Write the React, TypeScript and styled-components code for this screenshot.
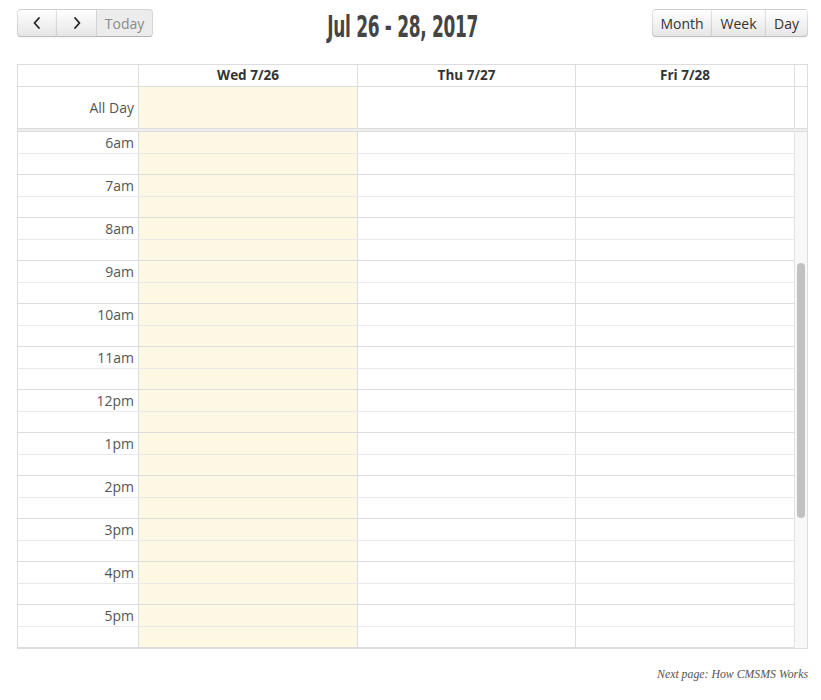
import React from "react";
import styled, { createGlobalStyle, css } from "styled-components";

const Global = createGlobalStyle`
  html, body { margin: 0; padding: 0; background: #fff; }
  body { font-family: "Open Sans", "Noto Sans", sans-serif; color: #333; font-size: 14px; }
  * { box-sizing: border-box; }
`;

const Page = styled.div`
  padding: 9px 13px 0 17px;
  width: 821px;
`;

const Toolbar = styled.div`
  display: flex;
  justify-content: space-between;
  align-items: flex-start;
  height: 28px;
  margin-bottom: 27px;
`;

const ButtonGroup = styled.div`
  display: flex;
`;

const Button = styled.button<{ $w: number; $first?: boolean; $last?: boolean; $disabled?: boolean }>`
  height: 28px;
  width: ${(p) => p.$w}px;
  padding: 0;
  margin: 0;
  display: flex;
  align-items: center;
  justify-content: center;
  font-family: "Open Sans", "Noto Sans", sans-serif;
  font-size: 14px;
  color: #333;
  background: linear-gradient(#ffffff, #e6e6e6);
  border: 1px solid;
  border-color: rgba(0, 0, 0, 0.1) rgba(0, 0, 0, 0.1) rgba(0, 0, 0, 0.25);
  box-shadow: inset 0 1px 0 rgba(255, 255, 255, 0.2), 0 1px 2px rgba(0, 0, 0, 0.05);
  border-radius: ${(p) =>
    p.$first ? "4px 0 0 4px" : p.$last ? "0 4px 4px 0" : "0"};
  margin-left: ${(p) => (p.$first ? "0" : "-1px")};
  cursor: pointer;
  ${(p) =>
    p.$disabled &&
    css`
      color: #8a8a8a;
      background: #ececec;
      box-shadow: none;
    `}
`;

const Title = styled.h2`
  margin: 4px 0 0;
  font-family: "DejaVu Sans Condensed", "DejaVu Sans", sans-serif;
  font-weight: bold;
  font-size: 30px;
  line-height: 28px;
  color: #444;
  transform: scaleX(0.63);
  transform-origin: center;
  white-space: nowrap;
  letter-spacing: -0.5px;
`;

const View = styled.div`
  width: 791px;
  border: 1px solid #ddd;
`;

const COLS = "120px 219px 218px 219px";

const HeadRow = styled.div`
  display: grid;
  grid-template-columns: ${COLS} 13px;
  height: 22px;
  border-bottom: 1px solid #ddd;
`;

const HeadCell = styled.div<{ $axis?: boolean }>`
  border-left: ${(p) => (p.$axis ? "none" : "1px solid #ddd")};
  font-weight: bold;
  font-size: 13.5px;
  line-height: 21px;
  text-align: center;
  color: #333;
`;

const AllDayRow = styled.div`
  display: grid;
  grid-template-columns: ${COLS} 13px;
  height: 41px;
`;

const AllDayCell = styled.div<{ $axis?: boolean; $today?: boolean }>`
  border-left: ${(p) => (p.$axis ? "none" : "1px solid #ddd")};
  background: ${(p) => (p.$today ? "#fcf8e3" : "transparent")};
  ${(p) =>
    p.$axis &&
    css`
      display: flex;
      align-items: center;
      justify-content: flex-end;
      padding-right: 4px;
      color: #555;
      font-size: 14px;
    `}
`;

const Divider = styled.div`
  height: 4px;
  border-top: 1px solid #ddd;
  border-bottom: 1px solid #ddd;
  background: #eee;
`;

const ScrollArea = styled.div`
  display: flex;
  height: 516px;
`;

const SlotBody = styled.div`
  width: 776px;
  height: 516px;
  overflow: hidden;
`;

const Gutter = styled.div`
  width: 13px;
  height: 516px;
  border-left: 1px solid #e2e2e2;
  background: #f8f8f8;
  padding: 0 2px 0 2px;
`;

const Thumb = styled.div`
  width: 8px;
  border-radius: 4px;
  background: #c1c1c1;
`;

const SlotRow = styled.div<{ $minor?: boolean }>`
  display: grid;
  grid-template-columns: ${COLS};
  height: 21.5px;
  border-bottom: 1px solid ${(p) => (p.$minor ? "#ddd" : "#e9e9e9")};
`;

const SlotCell = styled.div<{ $axis?: boolean; $today?: boolean }>`
  border-left: ${(p) => (p.$axis ? "none" : "1px solid #ddd")};
  background: ${(p) => (p.$today ? "#fcf8e3" : "transparent")};
  ${(p) =>
    p.$axis &&
    css`
      text-align: right;
      padding-right: 4px;
      color: #555;
      font-size: 14px;
      line-height: 21px;
    `}
`;

const Footer = styled.div`
  width: 791px;
  text-align: right;
  margin-top: 18px;
  font-family: "Liberation Serif", "DejaVu Serif", serif;
  font-style: italic;
  font-size: 11.8px;
  color: #555;
`;

const Chevron = ({ dir }: { dir: "left" | "right" }) => (
  <svg width="10" height="14" viewBox="0 0 10 14" aria-hidden>
    <path
      d={dir === "left" ? "M7 2 L2.5 7 L7 12" : "M3 2 L7.5 7 L3 12"}
      fill="none"
      stroke="#222"
      strokeWidth="1.8"
      strokeLinecap="round"
      strokeLinejoin="round"
    />
  </svg>
);

const days = [
  { label: "Wed 7/26", today: true },
  { label: "Thu 7/27", today: false },
  { label: "Fri 7/28", today: false },
];

const hourLabel = (h: number) => {
  if (h === 0) return "12am";
  if (h < 12) return `${h}am`;
  if (h === 12) return "12pm";
  return `${h - 12}pm`;
};

const FIRST_HOUR = 6;
const LAST_HOUR = 18;
const TOTAL_HOURS = 24;
const VIEW_H = 516;

export default function App() {
  const slots: React.ReactNode[] = [];
  for (let h = FIRST_HOUR; h < LAST_HOUR; h++) {
    for (let half = 0; half < 2; half++) {
      const minor = half === 1;
      slots.push(
        <SlotRow key={`${h}-${half}`} $minor={minor}>
          <SlotCell $axis>{minor ? "" : hourLabel(h)}</SlotCell>
          {days.map((d) => (
            <SlotCell key={d.label} $today={d.today} />
          ))}
        </SlotRow>
      );
    }
  }

  const thumbTop = (FIRST_HOUR / TOTAL_HOURS) * VIEW_H + 2;
  const thumbH = ((LAST_HOUR - FIRST_HOUR) / TOTAL_HOURS) * VIEW_H - 3;

  return (
    <>
      <Global />
      <Page>
        <Toolbar>
          <ButtonGroup>
            <Button $w={40} $first aria-label="prev">
              <Chevron dir="left" />
            </Button>
            <Button $w={41} aria-label="next">
              <Chevron dir="right" />
            </Button>
            <Button $w={57} $last $disabled>
              Today
            </Button>
          </ButtonGroup>
          <Title>Jul 26 - 28, 2017</Title>
          <ButtonGroup>
            <Button $w={60} $first>
              Month
            </Button>
            <Button $w={55}>Week</Button>
            <Button $w={43} $last>
              Day
            </Button>
          </ButtonGroup>
        </Toolbar>
        <View>
          <HeadRow>
            <HeadCell $axis />
            {days.map((d) => (
              <HeadCell key={d.label}>{d.label}</HeadCell>
            ))}
            <HeadCell />
          </HeadRow>
          <AllDayRow>
            <AllDayCell $axis>All Day</AllDayCell>
            {days.map((d) => (
              <AllDayCell key={d.label} $today={d.today} />
            ))}
            <AllDayCell />
          </AllDayRow>
          <Divider />
          <ScrollArea>
            <SlotBody>{slots}</SlotBody>
            <Gutter>
              <Thumb style={{ marginTop: thumbTop, height: thumbH }} />
            </Gutter>
          </ScrollArea>
        </View>
        <Footer>Next page: How CMSMS Works</Footer>
      </Page>
    </>
  );
}
